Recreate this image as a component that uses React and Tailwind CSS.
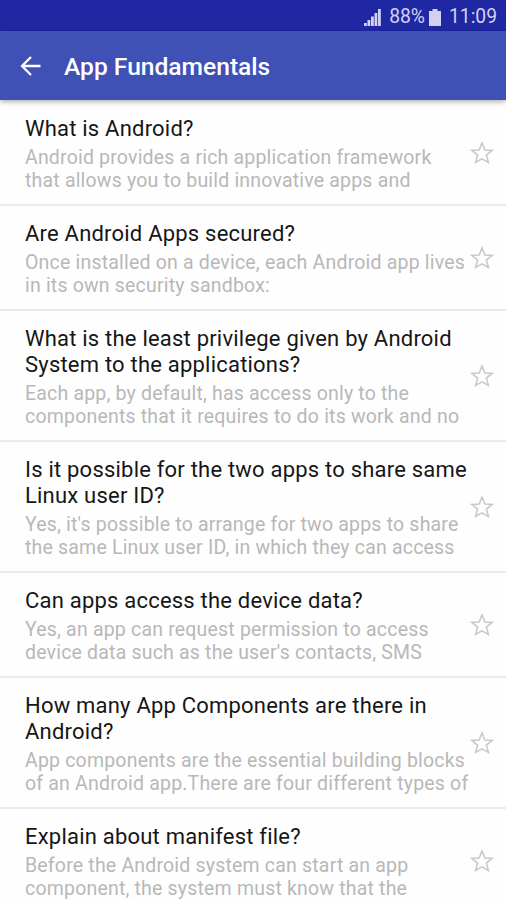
const questions = [
  {
    title: ["What is Android?"],
    answer: ["Android provides a rich application framework", "that allows you to build innovative apps and"],
  },
  {
    title: ["Are Android Apps secured?"],
    answer: ["Once installed on a device, each Android app lives", "in its own security sandbox:"],
  },
  {
    title: ["What is the least privilege given by Android", "System to the applications?"],
    answer: ["Each app, by default, has access only to the", "components that it requires to do its work and no"],
  },
  {
    title: ["Is it possible for the two apps to share same", "Linux user ID?"],
    answer: ["Yes, it's possible to arrange for two apps to share", "the same Linux user ID, in which they can access"],
  },
  {
    title: ["Can apps access the device data?"],
    answer: ["Yes, an app can request permission to access", "device data such as the user's contacts, SMS"],
  },
  {
    title: ["How many App Components are there in", "Android?"],
    answer: ["App components are the essential building blocks", "of an Android app.There are four different types of"],
  },
  {
    title: ["Explain about manifest file?"],
    answer: ["Before the Android system can start an app", "component, the system must know that the"],
  },
]

function StatusBar() {
  return (
    <div className="flex h-[31px] shrink-0 items-center justify-end bg-[#1f27a3] pr-[9px] pt-[3px] text-[19.3px] text-[#d0d2f0]">
      <svg width="17" height="17" viewBox="0 0 17 17" fill="currentColor">
        <path d="M0 14h2.8v3H0zM3.5 11h2.8v6H3.5zM7 7.5h2.8V17H7zM10.5 4h2.8v13h-2.8zM14 0h2.8v17H14z" />
      </svg>
      <span className="ml-[8px]">88%</span>
      <svg className="ml-[4px]" width="12" height="17" viewBox="0 0 12 17" fill="currentColor">
        <path d="M3.5 0h5v2H12v15H0V2h3.5z" />
      </svg>
      <span className="ml-[8px]">11:09</span>
    </div>
  )
}

function StarIcon() {
  return (
    <svg className="-mt-[3px] shrink-0" width="24" height="24" viewBox="0 0 24 24" fill="none" stroke="#c9c9c9" strokeWidth="1.6">
      <path d="M12 2l2.8 7 7.4.4-5.8 4.7 2 7.3L12 17.9l-6.4 3.5 2-7.3-5.8-4.7 7.4-.4z" />
    </svg>
  )
}

function QuestionRow({ title, answer }) {
  return (
    <li className="flex items-center border-b-2 border-[#ebebeb] pl-[25px] pr-3 pt-[15px] pb-[12px]">
      <div className="min-w-0 flex-1 whitespace-nowrap">
        <h2 className="text-[22px] leading-[26px] tracking-[0.21px] text-[#161616]">
          {title.map((line) => (
            <span key={line} className="block">{line}</span>
          ))}
        </h2>
        <p className="mt-[4px] text-[19.5px] leading-[23px] tracking-[0.19px] text-[#b8b8b8]">
          {answer.map((line) => (
            <span key={line} className="block">{line}</span>
          ))}
        </p>
      </div>
      <StarIcon />
    </li>
  )
}

export default function App() {
  return (
    <div className="flex h-[900px] w-[506px] flex-col overflow-hidden bg-[#fefefe] font-['Roboto',sans-serif]">
      <StatusBar />

      <header className="z-10 flex h-[69px] shrink-0 items-center bg-[#3f51b5] pl-[20px] text-white shadow-[0_2px_5px_rgba(0,0,0,0.3)]">
        <svg width="21" height="20" viewBox="0 0 21 20" fill="none" stroke="currentColor" strokeWidth="2.3">
          <path d="M20.5 10H2M11 1L2 10l9 9" />
        </svg>
        <h1 className="ml-[23px] pt-[3px] text-[24.6px] font-medium">App Fundamentals</h1>
      </header>

      <ul className="pt-px">
        {questions.map((q) => (
          <QuestionRow key={q.title[0]} title={q.title} answer={q.answer} />
        ))}
      </ul>
    </div>
  )
}
